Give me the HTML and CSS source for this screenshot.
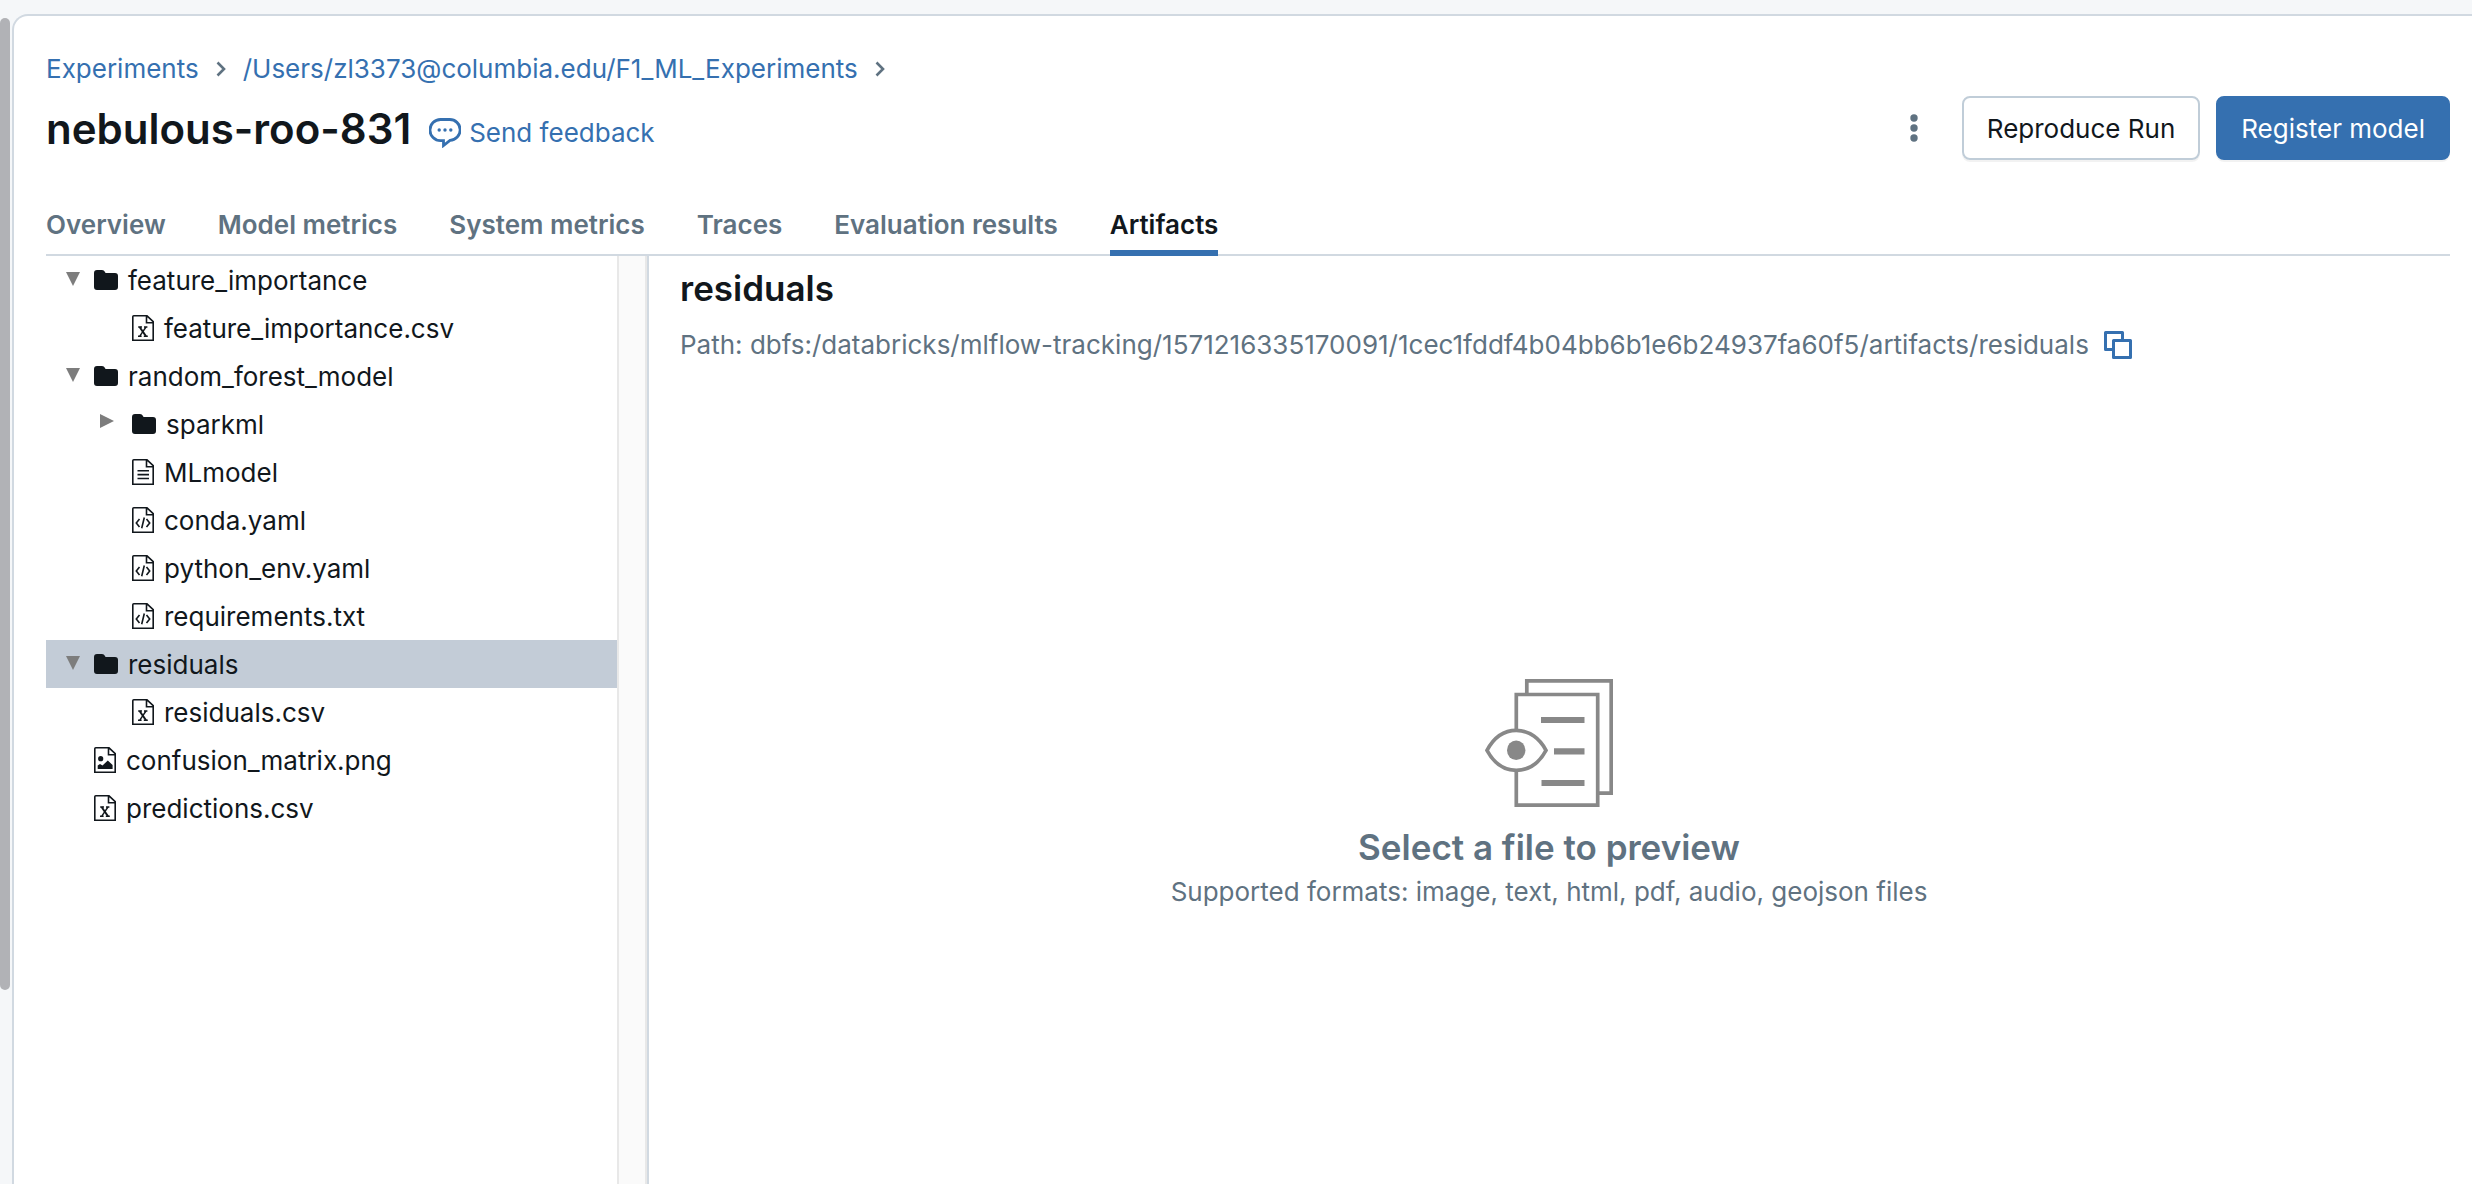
FILE: index.html
```html
<!DOCTYPE html>
<html lang="en">
<head>
<meta charset="utf-8">
<meta name="viewport" content="width=device-width, initial-scale=1">
<title>nebulous-roo-831 - Artifacts</title>
<link rel="stylesheet" href="styles.css">
</head>
<body>
<svg class="symbols" aria-hidden="true">
  <symbol id="chevron" viewBox="0 0 10 16"><path d="M1.5 1.5L8 8L1.5 14.5" fill="none" stroke="currentColor" stroke-width="2.6"/></symbol>
  <symbol id="arrow-down" viewBox="0 0 14 14"><path d="M0 0H14L7 14Z" fill="currentColor"/></symbol>
  <symbol id="arrow-right" viewBox="0 0 14 14"><path d="M0 0L14 7L0 14Z" fill="currentColor"/></symbol>
  <symbol id="folder" viewBox="0 0 24 20"><path d="M0 3Q0 0 3 0H8Q10 0 11 2L11.500 3H21Q24 3 24 6V17Q24 20 21 20H3Q0 20 0 17Z" fill="currentColor"/></symbol>
  <symbol id="page" viewBox="0 0 22 26"><path d="M1.800 .8H15L21.200 6.600V25.200H.8V1.800Q.8 .8 1.800 .8ZM14.500 .8V7.700H21.200" fill="none" stroke="currentColor" stroke-width="1.600"/></symbol>
  <symbol id="file-table" viewBox="0 0 22 26"><use href="#page"/><path d="M7.600 12L14 21.300" fill="none" stroke="currentColor" stroke-width="2"/><path d="M14 12L7.600 21.300M6.200 12H10M12 12H15.400M6 21.300H9.600M11.800 21.300H15.800" fill="none" stroke="currentColor" stroke-width="1.400"/></symbol>
  <symbol id="file-text" viewBox="0 0 22 26"><use href="#page"/><path d="M5.500 11.700H17M5.500 15.600H17M5.500 19.500H17" fill="none" stroke="currentColor" stroke-width="1.600"/></symbol>
  <symbol id="file-code" viewBox="0 0 22 26"><use href="#page"/><path d="M7.500 12L4.300 16L7.500 20M14.500 12L17.700 16L14.500 20M12.300 10.500L9.700 21.300" fill="none" stroke="currentColor" stroke-width="1.600"/></symbol>
  <symbol id="file-image" viewBox="0 0 22 26"><use href="#page"/><circle cx="6.700" cy="11.700" r="2.600" fill="currentColor"/><path d="M3.700 22V18.500L6 17L8.500 18.500L13.800 13.500L18.600 18V22Z" fill="currentColor"/></symbol>
</svg>

<div class="shell">
  <div class="rail"><div class="thumb"></div></div>
  <main class="panel">
    <nav class="breadcrumb" aria-label="Breadcrumb">
      <a href="#">Experiments</a>
      <svg class="chevron"><use href="#chevron"/></svg>
      <a href="#">/Users/zl3373@columbia.edu/F1_ML_Experiments</a>
      <svg class="chevron"><use href="#chevron"/></svg>
    </nav>

    <header class="header">
      <div class="heading">
        <h1>nebulous-roo-831</h1>
        <a class="feedback" href="#">
          <svg class="chat" viewBox="0 0 32 30"><path d="M11.500 1.500H20.500A10.300 10.300 0 0 1 21 22.300L14.500 27.500V22.600H11.500A10.500 10.500 0 0 1 11.500 1.500Z" fill="none" stroke="currentColor" stroke-width="2.800"/><g fill="currentColor"><circle cx="10.200" cy="12" r="1.700"/><circle cx="16" cy="12" r="1.700"/><circle cx="21.800" cy="12" r="1.700"/></g></svg>
          <span>Send feedback</span>
        </a>
      </div>
      <div class="actions">
        <button class="more" type="button" aria-label="More actions">
          <svg viewBox="0 0 8 28" fill="currentColor"><circle cx="4" cy="4" r="3.700"/><circle cx="4" cy="14" r="3.700"/><circle cx="4" cy="24" r="3.700"/></svg>
        </button>
        <button class="button" type="button">Reproduce Run</button>
        <button class="button primary" type="button">Register model</button>
      </div>
    </header>

    <nav class="tabs" aria-label="Run sections">
      <a href="#">Overview</a>
      <a href="#">Model metrics</a>
      <a href="#">System metrics</a>
      <a href="#">Traces</a>
      <a href="#">Evaluation results</a>
      <a class="active" href="#" aria-current="page">Artifacts</a>
    </nav>

    <div class="workspace">
      <ul class="tree">
        <li class="row"><svg class="arrow"><use href="#arrow-down"/></svg><svg class="folder"><use href="#folder"/></svg><span>feature_importance</span></li>
        <li class="row file nested"><svg class="page"><use href="#file-table"/></svg><span>feature_importance.csv</span></li>
        <li class="row"><svg class="arrow"><use href="#arrow-down"/></svg><svg class="folder"><use href="#folder"/></svg><span>random_forest_model</span></li>
        <li class="row nested"><svg class="arrow"><use href="#arrow-right"/></svg><svg class="folder"><use href="#folder"/></svg><span>sparkml</span></li>
        <li class="row file nested"><svg class="page"><use href="#file-text"/></svg><span>MLmodel</span></li>
        <li class="row file nested"><svg class="page"><use href="#file-code"/></svg><span>conda.yaml</span></li>
        <li class="row file nested"><svg class="page"><use href="#file-code"/></svg><span>python_env.yaml</span></li>
        <li class="row file nested"><svg class="page"><use href="#file-code"/></svg><span>requirements.txt</span></li>
        <li class="row selected"><svg class="arrow"><use href="#arrow-down"/></svg><svg class="folder"><use href="#folder"/></svg><span>residuals</span></li>
        <li class="row file nested"><svg class="page"><use href="#file-table"/></svg><span>residuals.csv</span></li>
        <li class="row file"><svg class="page"><use href="#file-image"/></svg><span>confusion_matrix.png</span></li>
        <li class="row file"><svg class="page"><use href="#file-table"/></svg><span>predictions.csv</span></li>
      </ul>
      <div class="resizer"></div>
      <section class="detail">
        <h2>residuals</h2>
        <div class="path">
          <span>Path: dbfs:/databricks/mlflow-tracking/1571216335170091/1cec1fddf4b04bb6b1e6b24937fa60f5/artifacts/residuals</span>
          <button class="copy" type="button" aria-label="Copy path">
            <svg viewBox="0 0 28 28" fill="none" stroke="currentColor" stroke-width="3" stroke-linejoin="round"><path d="M8 18.500H1.500V1.500H18.500V8"/><path d="M9.500 9.500H26.500V26.500H9.500Z"/></svg>
          </button>
        </div>
        <div class="empty">
          <svg class="preview" viewBox="0 0 128 128" fill="none" stroke="currentColor" stroke-width="3.700">
            <path d="M41.800 14V1.800H126.200V114.200H114"/>
            <path d="M31.300 50V15.500H112.700V126.200H31.300V92"/>
            <path d="M2 71.300C8 60 18 51.300 31.300 51.300S55 60 61 71.300C55 82.600 45 91.300 31.300 91.300S8 82.600 2 71.300Z"/>
            <path d="M56 41H99.500M69 72.400H99.500M56.500 104H99.500" stroke-width="6.200"/>
            <ellipse cx="31.200" cy="71.200" rx="9.200" ry="9.800" fill="currentColor" stroke="none"/>
          </svg>
          <h3>Select a file to preview</h3>
          <p>Supported formats: image, text, html, pdf, audio, geojson files</p>
        </div>
      </section>
    </div>
  </main>
</div>
</body>
</html>
```
FILE: styles.css
```css
* {
  box-sizing: border-box;
}

body {
  margin: 0;
  background: #f5f7f9;
  color: #11171c;
  font: 400 26px/42px Inter, "Liberation Sans", sans-serif;
}

h1, h2, h3, p, ul {
  margin: 0;
  padding: 0;
}

h1, h2, h3 {
  font-weight: 600;
}

a {
  color: #3570b0;
  text-decoration: none;
}

button {
  font: inherit;
  color: inherit;
  background: none;
  border: 0;
  padding: 0;
  cursor: pointer;
}

svg {
  display: block;
  flex: none;
}

.symbols {
  position: absolute;
  width: 0;
  height: 0;
}

.shell {
  display: flex;
  min-height: 100vh;
  padding-top: 14px;
}

.rail {
  display: flex;
  width: 12px;
  padding-top: 4px;
}

.thumb {
  width: 10px;
  height: 83.4%;
  border-radius: 5px;
  background: #b1b2b6;
}

.panel {
  display: flex;
  flex: 1;
  flex-direction: column;
  min-width: 0;
  padding: 32px 22px 0 32px;
  background: #fff;
  border: solid #d1d9e1;
  border-width: 2px 0 0 2px;
  border-top-left-radius: 16px;
}

.breadcrumb {
  display: flex;
  align-items: center;
  gap: 17px;
}

.chevron {
  width: 10px;
  height: 16px;
  color: #5f7281;
}

.header {
  display: flex;
  align-items: center;
  justify-content: space-between;
  height: 64px;
  margin-top: 6px;
}

.heading {
  display: flex;
  align-items: center;
  gap: 18px;
  padding-top: 2px;
}

h1 {
  font-size: 42px;
  line-height: 62px;
}

.feedback {
  display: flex;
  align-items: center;
  gap: 8px;
  padding-top: 8px;
}

.chat {
  width: 32px;
  height: 30px;
}

.actions {
  display: flex;
  gap: 16px;
}

.more {
  display: grid;
  place-items: center;
  width: 64px;
  color: #5f7281;
}

.more svg {
  width: 8px;
  height: 28px;
}

.button {
  height: 64px;
  padding: 2px 23px 0;
  border: 2px solid #c0cdd8;
  border-radius: 8px;
  box-shadow: 0 2px 0 rgba(0, 0, 0, 0.05);
}

.primary {
  color: #fff;
  background: #3570b0;
  border-color: #3570b0;
}

.tabs {
  display: flex;
  gap: 52px;
  margin-top: 44px;
  box-shadow: inset 0 -2px 0 #d1d9e1;
  font-weight: 600;
}

.tabs a {
  padding-bottom: 4px;
  border-bottom: 6px solid transparent;
  color: #5f7281;
}

.tabs .active {
  color: #11171c;
  border-color: #3570b0;
}

.workspace {
  display: grid;
  flex: 1;
  grid-template-columns: 571px 32px 1fr;
}

.tree {
  list-style: none;
}

.row {
  display: flex;
  align-items: center;
  gap: 10px;
  height: 48px;
  padding-left: 20px;
}

.row span {
  padding-top: 2px;
}

.row.nested {
  padding-left: 54px;
}

.row.file {
  padding-left: 48px;
}

.row.file.nested {
  padding-left: 86px;
}

.row.selected {
  background: #c3ccd7;
}

.arrow {
  width: 14px;
  height: 14px;
  margin: 0 4px 2px 0;
  color: #7d7d7d;
}

.nested .arrow {
  margin: 0 8px 6px 0;
}

.folder {
  width: 24px;
  height: 20px;
}

.page {
  width: 22px;
  height: 26px;
}

.resizer {
  background: #fafafa;
  border: solid #e8e8e8;
  border-width: 0 2px;
  box-shadow: inset -2px 0 0 #e8e8e8;
  border-right-color: #d1d9e1;
}

.detail {
  display: flex;
  flex-direction: column;
  padding: 8px 0 0 31px;
}

h2, h3 {
  font-size: 35px;
  line-height: 48px;
}

.path {
  display: flex;
  align-items: center;
  gap: 15px;
  margin-top: 12px;
  color: #5f7281;
}

.copy {
  color: #3570b0;
}

.copy svg {
  width: 28px;
  height: 28px;
}

.empty {
  display: flex;
  flex: 1;
  flex-direction: column;
  align-items: center;
  justify-content: center;
  padding: 42px 32px 0 0;
  color: #5f7281;
}

.preview {
  width: 128px;
  height: 128px;
  margin-bottom: 16px;
  color: #888;
}
```
